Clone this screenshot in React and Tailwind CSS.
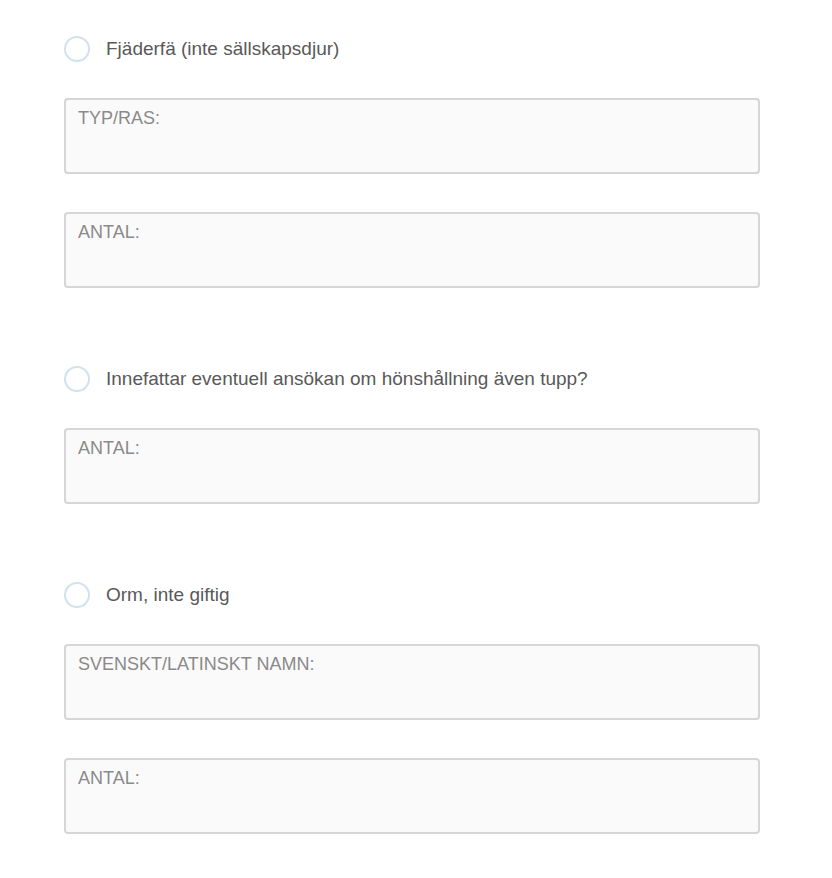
import React from "react";

const sections = [
  { label: "Fjäderfä (inte sällskapsdjur)", fields: ["TYP/RAS:", "ANTAL:"] },
  { label: "Innefattar eventuell ansökan om hönshållning även tupp?", fields: ["ANTAL:"] },
  { label: "Orm, inte giftig", fields: ["SVENSKT/LATINSKT NAMN:", "ANTAL:"] },
];

const Field = ({ label }) => (
  <div className="h-[76px] w-full rounded-[4px] border-2 border-[#d6d6d6] bg-[#fafafa] px-[12px] pt-[6px]">
    <span className="text-[18px] leading-[24px] text-[#8a8a8a]">{label}</span>
  </div>
);

export default function App() {
  return (
    <div
      className="min-h-[878px] bg-white px-[64px] pt-[36px]"
      style={{ fontFamily: '"Liberation Sans", Arial, sans-serif' }}
    >
      <div className="flex w-[696px] flex-col gap-[78px]">
        {sections.map((s, i) => (
          <div key={i} className="flex flex-col">
            {/* RADIO */}
            <label className="flex h-[26px] items-center gap-[16px]">
              <span className="h-[26px] w-[26px] shrink-0 rounded-full border-2 border-[#d0e2ec] bg-white" />
              <span className="text-[19px] text-[#595959]">{s.label}</span>
            </label>

            {/* FIELDS */}
            <div className="mt-[36px] flex flex-col gap-[38px]">
              {s.fields.map((f, j) => (
                <Field key={j} label={f} />
              ))}
            </div>
          </div>
        ))}
      </div>
    </div>
  );
}
